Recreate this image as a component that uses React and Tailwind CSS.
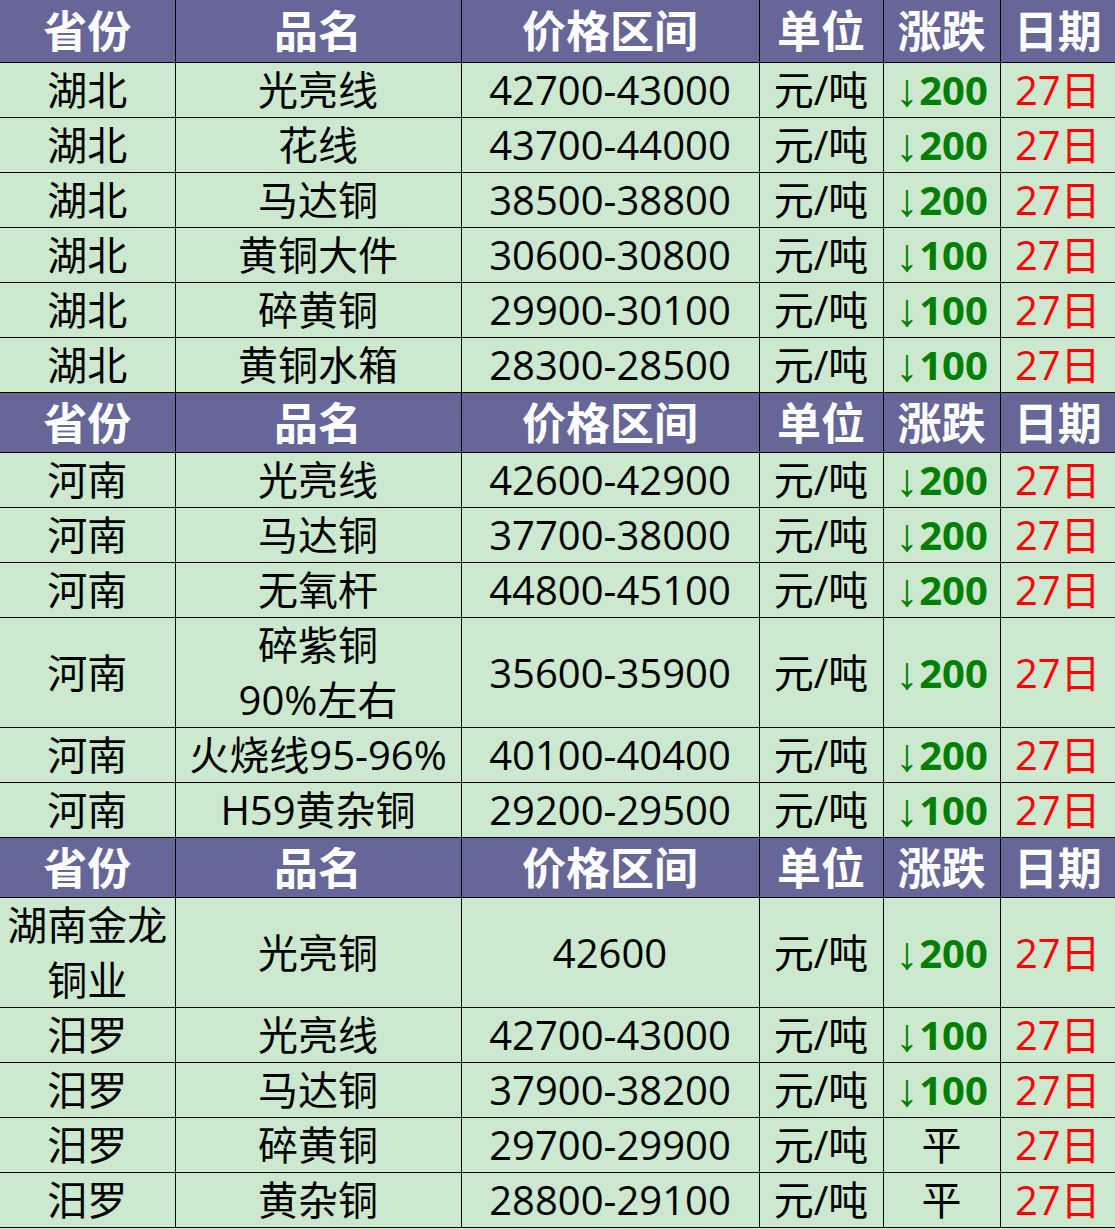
const sections = [
  [
    ["湖北", "光亮线", "42700-43000", "↓200"],
    ["湖北", "花线", "43700-44000", "↓200"],
    ["湖北", "马达铜", "38500-38800", "↓200"],
    ["湖北", "黄铜大件", "30600-30800", "↓100"],
    ["湖北", "碎黄铜", "29900-30100", "↓100"],
    ["湖北", "黄铜水箱", "28300-28500", "↓100"],
  ],
  [
    ["河南", "光亮线", "42600-42900", "↓200"],
    ["河南", "马达铜", "37700-38000", "↓200"],
    ["河南", "无氧杆", "44800-45100", "↓200"],
    ["河南", "碎紫铜\n90%左右", "35600-35900", "↓200"],
    ["河南", "火烧线95-96%", "40100-40400", "↓200"],
    ["河南", "H59黄杂铜", "29200-29500", "↓100"],
  ],
  [
    ["湖南金龙\n铜业", "光亮铜", "42600", "↓200"],
    ["汨罗", "光亮线", "42700-43000", "↓100"],
    ["汨罗", "马达铜", "37900-38200", "↓100"],
    ["汨罗", "碎黄铜", "29700-29900", "平"],
    ["汨罗", "黄杂铜", "28800-29100", "平"],
  ],
];

const heads = ["省份", "品名", "价格区间", "单位", "涨跌", "日期"];

function Cell({ tall, className = "", children }) {
  return (
    <div
      className={
        "flex flex-col items-center justify-center whitespace-nowrap leading-none " +
        (tall ? "h-[109px] " : "h-[54px] ") +
        className
      }
    >
      {children}
    </div>
  );
}

function Lines({ text }) {
  return text.split("\n").map((t, i) => (
    <div key={i} className="h-[55px] flex items-center">
      {t}
    </div>
  ));
}

function Change({ value }) {
  if (value === "平") return <span className="text-black">平</span>;
  return (
    <span className="flex items-center font-bold text-[#008000]">
      <span className="font-['Liberation_Sans',sans-serif] font-normal text-[46px] mr-[1px]">↓</span>
      {value.slice(1)}
    </span>
  );
}

export default function App() {
  return (
    <div className="w-[1115px] h-[1229px] bg-[#cce8cf] overflow-hidden">
      <table
        className="w-[1115px] table-fixed border-collapse text-[40px] text-black"
        style={{ fontFamily: '"Open Sans", "Noto Sans CJK SC", sans-serif' }}
      >
        <colgroup>
          <col className="w-[175px]" />
          <col className="w-[286px]" />
          <col className="w-[298px]" />
          <col className="w-[124px]" />
          <col className="w-[117px]" />
          <col className="w-[115px]" />
        </colgroup>
        <tbody>
          {sections.map((rows, s) => [
            <tr key={"h" + s}>
              {heads.map((h) => (
                <td
                  key={h}
                  className={
                    "bg-[#666699] text-white font-bold text-[44px] text-center border border-black p-0 first:border-l-0 last:border-r-0 " +
                    (s === 0 ? "border-t-0" : "")
                  }
                >
                  <div
                    className={
                      "flex items-center justify-center leading-none " +
                      (s === 0 ? "h-[62px]" : "h-[59px]")
                    }
                  >
                    {h}
                  </div>
                </td>
              ))}
            </tr>,
            ...rows.map((r, i) => {
              const tall = r[0].includes("\n") || r[1].includes("\n");
              return (
                <tr key={s + "-" + i} className="bg-[#cce8cf]">
                  <td className="border border-black border-l-0 p-0">
                    <Cell tall={tall}>
                      <Lines text={r[0]} />
                    </Cell>
                  </td>
                  <td className="border border-black p-0">
                    <Cell tall={tall}>
                      <Lines text={r[1]} />
                    </Cell>
                  </td>
                  <td className="border border-black p-0">
                    <Cell tall={tall}>{r[2]}</Cell>
                  </td>
                  <td className="border border-black p-0">
                    <Cell tall={tall}>元/吨</Cell>
                  </td>
                  <td className="border border-black p-0">
                    <Cell tall={tall}>
                      <Change value={r[3]} />
                    </Cell>
                  </td>
                  <td className="border border-black border-r-0 p-0">
                    <Cell tall={tall} className="text-[#ff0000]">
                      27日
                    </Cell>
                  </td>
                </tr>
              );
            }),
          ])}
        </tbody>
      </table>
    </div>
  );
}
